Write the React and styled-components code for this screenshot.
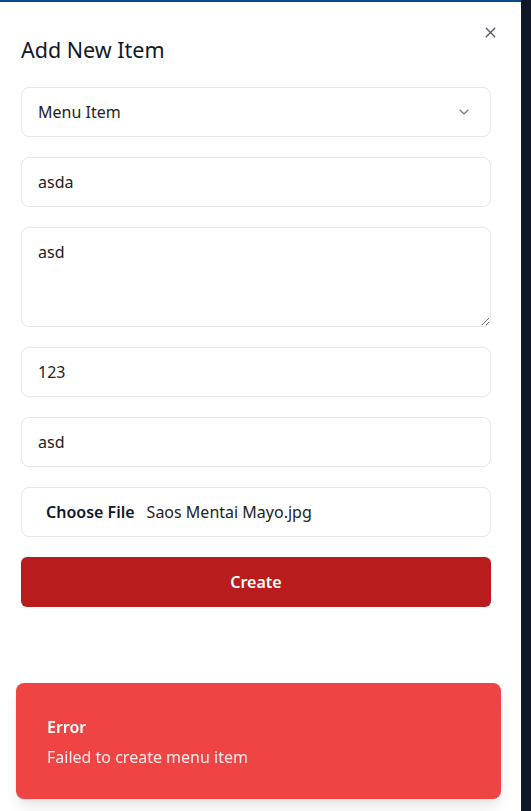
import React from 'react';
import styled, { createGlobalStyle } from 'styled-components';
import { X, ChevronDown } from 'lucide-react';

const GlobalStyle = createGlobalStyle`
  html, body {
    margin: 0;
    padding: 0;
    height: 100%;
  }
  body {
    background: #0f1729;
    font-family: "Noto Sans", "Open Sans", sans-serif;
    color: #111827;
  }
  * {
    box-sizing: border-box;
  }
`;

const Panel = styled.div`
  position: relative;
  width: 521px;
  height: 811px;
  background: #ffffff;
  border-top: 2px solid #0b4a8c;
  padding: 34px 30px 0 21px;
`;

const CloseButton = styled.button`
  position: absolute;
  top: 22px;
  right: 22px;
  border: none;
  background: none;
  padding: 0;
  color: #4b5563;
  display: flex;
  cursor: pointer;
`;

const Title = styled.h2`
  margin: 0 0 23px;
  font-size: 21.5px;
  font-weight: 400;
  line-height: 28px;
  color: #111827;
`;

const Form = styled.form`
  display: flex;
  flex-direction: column;
  gap: 20px;
`;

const fieldBase = `
  width: 100%;
  border: 1px solid #e5e7eb;
  border-radius: 8px;
  background: #ffffff;
  font-family: "Noto Sans", "Open Sans", sans-serif;
  font-size: 16px;
  color: #222222;
  outline: none;
`;

const Select = styled.div`
  ${fieldBase}
  height: 50px;
  display: flex;
  align-items: center;
  justify-content: space-between;
  padding: 0 18px 0 16px;
  svg {
    color: #6b7280;
  }
`;

const Input = styled.input`
  ${fieldBase}
  height: 50px;
  padding: 0 16px;
`;

const TextArea = styled.textarea`
  ${fieldBase}
  height: 100px;
  padding: 12px 16px;
  line-height: 24px;
  resize: vertical;
  display: block;
`;

const FileField = styled.label`
  ${fieldBase}
  height: 50px;
  display: flex;
  align-items: center;
  gap: 12px;
  padding: 0 24px;
`;

const FileButton = styled.span`
  font-weight: 600;
  color: #111827;
`;

const FileName = styled.span`
  color: #222222;
`;

const SubmitButton = styled.button`
  height: 50px;
  width: 100%;
  border: none;
  border-radius: 6px;
  background: #b91c1c;
  color: #ffffff;
  font-family: "Noto Sans", "Open Sans", sans-serif;
  font-size: 16px;
  font-weight: 600;
  cursor: pointer;
`;

const Toast = styled.div`
  position: fixed;
  left: 16px;
  top: 683px;
  width: 485px;
  height: 116px;
  border-radius: 8px;
  background: #ef4444;
  color: #ffffff;
  padding: 2px 31px 0;
  display: flex;
  flex-direction: column;
  justify-content: center;
  gap: 6px;
  box-shadow: 0 10px 15px -3px rgba(0, 0, 0, 0.1), 0 4px 6px -4px rgba(0, 0, 0, 0.1);
`;

const ToastTitle = styled.div`
  font-size: 16px;
  font-weight: 600;
  line-height: 24px;
`;

const ToastText = styled.div`
  font-size: 16px;
  line-height: 24px;
  opacity: 0.9;
`;

export default function App() {
  return (
    <>
      <GlobalStyle />
      <Panel>
        <CloseButton type="button" aria-label="Close">
          <X size={17} strokeWidth={1.8} />
        </CloseButton>
        <Title>Add New Item</Title>
        <Form onSubmit={e => e.preventDefault()}>
          <Select>
            <span>Menu Item</span>
            <ChevronDown size={16} strokeWidth={1.6} />
          </Select>
          <Input defaultValue="asda" />
          <TextArea defaultValue="asd" />
          <Input defaultValue="123" />
          <Input defaultValue="asd" />
          <FileField>
            <FileButton>Choose File</FileButton>
            <FileName>Saos Mentai Mayo.jpg</FileName>
          </FileField>
          <SubmitButton type="submit">Create</SubmitButton>
        </Form>
      </Panel>
      <Toast>
        <ToastTitle>Error</ToastTitle>
        <ToastText>Failed to create menu item</ToastText>
      </Toast>
    </>
  );
}
